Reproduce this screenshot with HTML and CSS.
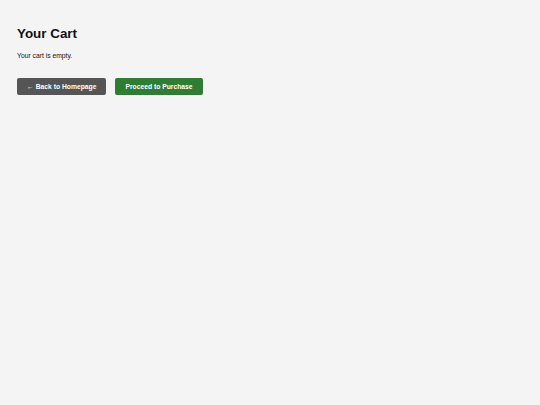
FILE: index.html
```html
<!DOCTYPE html>
<html lang="en">
  <head>
    <meta charset="UTF-8" />
    <meta name="viewport" content="width=device-width, initial-scale=1.0" />
    <title>Your Cart</title>
    <link rel="stylesheet" href="styles.css">
  </head>

  <body>
    <h1>Your Cart</h1>
    <p>Your cart is empty.</p>

    <!-- Acciones del carrito -->
    <div class="actions">
      <a href="/" class="btn btn-back">&larr; Back to Homepage</a>
      <a href="/purchase" class="btn btn-purchase">Proceed to Purchase</a>
    </div>
  </body>
</html>
```

FILE: styles.css
```css
body {
  font-family: "Liberation Sans", Arial, sans-serif;
  font-size: 6.75px;
  margin: 0;
  padding: 17px;
  background-color: #f4f4f4;
  color: #111;
}

h1 {
  font-size: 13.4px;
  margin: 8.5px 0 11.5px;
}

p {
  margin: 0;
}

.actions {
  display: flex;
  gap: 9px;
  margin-top: 19px;
}

.btn {
  display: inline-block;
  padding: 0 10px;
  height: 17px;
  line-height: 17px;
  border-radius: 2px;
  color: white;
  font-weight: bold;
  text-decoration: none;
}

.btn-back {
  background-color: #555555;
}

.btn-purchase {
  background-color: #2e7d32;
}
```
